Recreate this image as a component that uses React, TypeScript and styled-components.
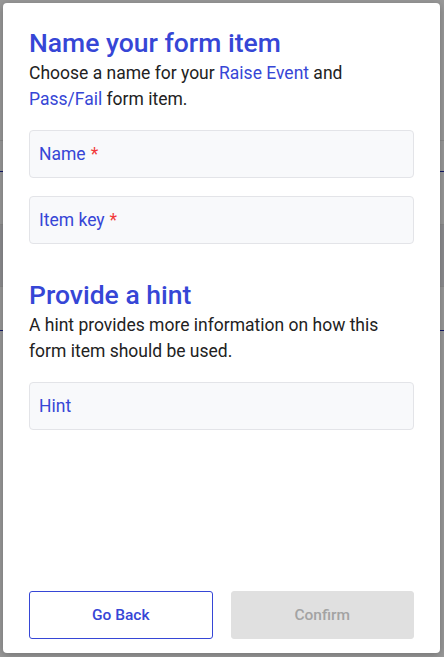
import styled, { createGlobalStyle } from "styled-components";

const GlobalStyle = createGlobalStyle`
  html, body {
    margin: 0;
    padding: 0;
    height: 100%;
    overflow: hidden;
    font-family: Roboto, "Liberation Sans", Arial, sans-serif;
  }
  * { box-sizing: border-box; }
`;

const Page = styled.div`
  position: relative;
  width: 444px;
  height: 657px;
  background: #fff;
  display: flex;
  flex-direction: column;
`;

const PageRow = styled.div<{ $h: number; $line?: string; $bg?: string }>`
  height: ${(p) => p.$h}px;
  background: ${(p) => p.$bg || "#fff"};
  border-bottom: 1px solid ${(p) => p.$line || "#e6e6e6"};
`;

const Overlay = styled.div`
  position: absolute;
  inset: 0;
  background: rgba(0, 0, 0, 0.4);
  padding: 3px 4px 4px 3px;
  display: flex;
`;

const Modal = styled.div`
  width: 437px;
  height: 650px;
  background: #fff;
  border-radius: 4px;
  box-shadow: 0 2px 8px rgba(0, 0, 0, 0.25);
  padding: 24px 26px 14px 26px;
  display: flex;
  flex-direction: column;
`;

const Section = styled.div`
  display: flex;
  flex-direction: column;
`;

const Title = styled.h2`
  margin: 0;
  font-size: 26.5px;
  line-height: 32px;
  font-weight: 500;
  color: #3646d6;
`;

const Subtitle = styled.p`
  margin: 1px 0 0;
  font-size: 17.5px;
  line-height: 26px;
  color: #222;
`;

const Link = styled.span`
  color: #3646d6;
`;

const Field = styled.div<{ $mt?: number }>`
  margin-top: ${(p) => p.$mt ?? 18}px;
  height: 48px;
  border: 1px solid #e3e4e8;
  border-radius: 4px;
  background: #f8f9fb;
  padding: 0 9px;
  display: flex;
  align-items: center;
  font-size: 17.5px;
  color: #3646d6;
`;

const Required = styled.span`
  color: #f23a3a;
  margin-left: 5px;
`;

const HintSection = styled(Section)`
  margin-top: 35px;
`;

const Footer = styled.div`
  margin-top: auto;
  display: grid;
  grid-template-columns: 1fr 1fr;
  gap: 18px;
`;

const Button = styled.button<{ $variant: "outline" | "disabled" }>`
  height: 48px;
  border-radius: 3px;
  font-family: inherit;
  font-size: 15.5px;
  font-weight: 500;
  border: 1px solid
    ${(p) => (p.$variant === "outline" ? "#3646d6" : "#e0e0e0")};
  background: ${(p) => (p.$variant === "outline" ? "#fff" : "#e0e0e0")};
  color: ${(p) => (p.$variant === "outline" ? "#3646d6" : "#a3a3a3")};
`;

export default function App() {
  return (
    <>
      <GlobalStyle />
      <Page>
        <PageRow $h={141} />
        <PageRow $h={31} $line="#1f2ab0" />
        <PageRow $h={53} />
        <PageRow $h={62} $bg="#ececf0" />
        <PageRow $h={44} $line="#1f2ab0" />
        <Overlay>
          <Modal>
            <Section>
              <Title>Name your form item</Title>
              <Subtitle>
                Choose a name for your <Link>Raise Event</Link> and{" "}
                <Link>Pass/Fail</Link> form item.
              </Subtitle>
            </Section>
            <Field>
              Name<Required>*</Required>
            </Field>
            <Field>
              Item key<Required>*</Required>
            </Field>
            <HintSection>
              <Title>Provide a hint</Title>
              <Subtitle>
                A hint provides more information on how this form item should
                be used.
              </Subtitle>
            </HintSection>
            <Field>Hint</Field>
            <Footer>
              <Button $variant="outline">Go Back</Button>
              <Button $variant="disabled" disabled>
                Confirm
              </Button>
            </Footer>
          </Modal>
        </Overlay>
      </Page>
    </>
  );
}
